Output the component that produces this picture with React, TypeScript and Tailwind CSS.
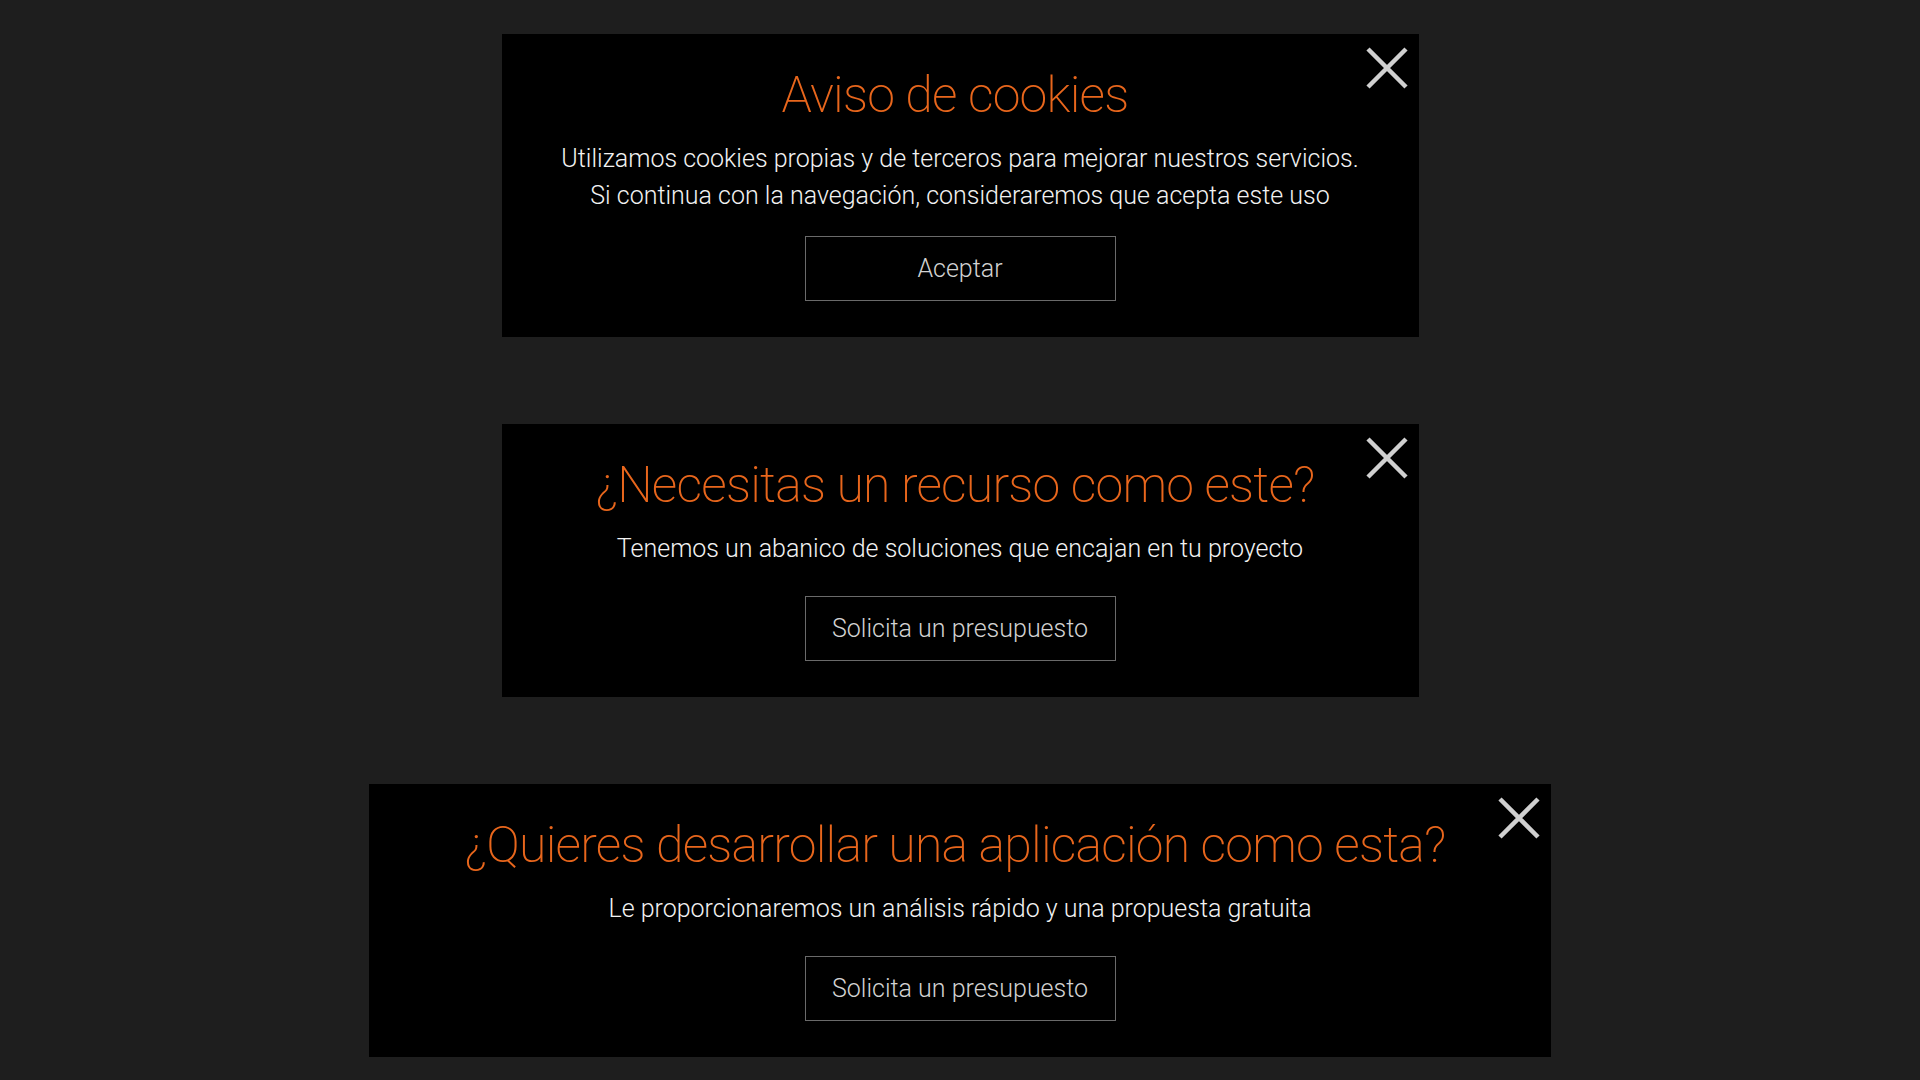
interface PanelProps {
    title: string;
    lines: string[];
    action: string;
    wide?: boolean;
    gapAfterText: string;
}

const CloseIcon = () => (
    <svg width="42" height="42" viewBox="0 0 42 42" fill="none">
        <path d="M2 2L40 40M40 2L2 40" stroke="#d0d0d0" strokeWidth="4.5" />
    </svg>
);

const Panel = ({ title, lines, action, wide, gapAfterText }: PanelProps) => {
    return (
        <div
            className={`relative bg-black flex flex-col items-center pt-[31px] pb-[36px] ${
                wide ? 'w-[1182px]' : 'w-[917px]'
            }`}
        >
            <button className="absolute top-[13px] right-[11px] w-[42px] h-[42px]">
                <CloseIcon />
            </button>
            <h2 className="pr-[10px] text-[50px] leading-[60px] font-extralight tracking-[-0.8px] text-[#e8661c]">
                {title}
            </h2>
            <div className="mt-[15px] text-center text-[25px] leading-[37px] font-light text-[#f2f2f2]">
                {lines.map((line) => (
                    <p key={line}>{line}</p>
                ))}
            </div>
            <button
                className={`${gapAfterText} w-[311px] h-[65px] border border-[#6a6a6a] text-[25px] font-light text-[#d2d2d2]`}
            >
                {action}
            </button>
        </div>
    );
};

export default function App() {
    return (
        <div
            className="min-h-screen w-full bg-[#1e1e1e] flex flex-col items-center pt-[34px] gap-[87px]"
            style={{ fontFamily: 'Roboto, "Noto Sans", sans-serif' }}
        >
            <Panel
                title="Aviso de cookies"
                lines={[
                    'Utilizamos cookies propias y de terceros para mejorar nuestros servicios.',
                    'Si continua con la navegación, consideraremos que acepta este uso',
                ]}
                action="Aceptar"
                gapAfterText="mt-[22px]"
            />
            <Panel
                title="¿Necesitas un recurso como este?"
                lines={['Tenemos un abanico de soluciones que encajan en tu proyecto']}
                action="Solicita un presupuesto"
                gapAfterText="mt-[29px]"
            />
            <Panel
                title="¿Quieres desarrollar una aplicación como esta?"
                lines={['Le proporcionaremos un análisis rápido y una propuesta gratuita']}
                action="Solicita un presupuesto"
                wide
                gapAfterText="mt-[29px]"
            />
        </div>
    );
}
